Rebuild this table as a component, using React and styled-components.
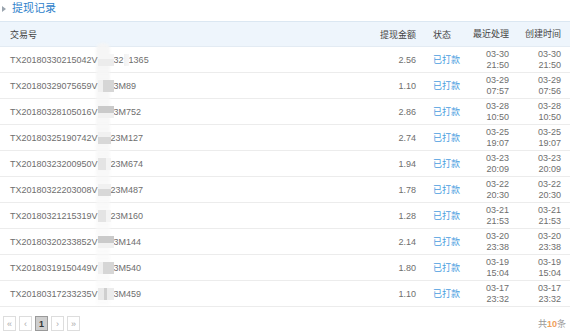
import styled, { createGlobalStyle, css } from "styled-components";

const GlobalStyle = createGlobalStyle`
  html, body {
    margin: 0;
    padding: 0;
    background: #fff;
  }
  body {
    font-family: "Liberation Sans", "Noto Sans CJK SC", sans-serif;
    color: #666;
  }
`;

const rows = [
  { pre: "TX20180330215042V", mask: 0, post: "32", tail: "1365", amount: "2.56", recent: ["03-30", "21:50"], created: ["03-30", "21:50"] },
  { pre: "TX20180329075659V", mask: 1, post: "3M89", amount: "1.10", recent: ["03-29", "07:57"], created: ["03-29", "07:56"] },
  { pre: "TX20180328105016V", mask: 2, post: "3M752", amount: "2.86", recent: ["03-28", "10:50"], created: ["03-28", "10:50"] },
  { pre: "TX20180325190742V", mask: 3, post: "23M127", amount: "2.74", recent: ["03-25", "19:07"], created: ["03-25", "19:07"] },
  { pre: "TX20180323200950V", mask: 4, post: "23M674", amount: "1.94", recent: ["03-23", "20:09"], created: ["03-23", "20:09"] },
  { pre: "TX20180322203008V", mask: 3, post: "23M487", amount: "1.78", recent: ["03-22", "20:30"], created: ["03-22", "20:30"] },
  { pre: "TX20180321215319V", mask: 4, post: "23M160", amount: "1.28", recent: ["03-21", "21:53"], created: ["03-21", "21:53"] },
  { pre: "TX20180320233852V", mask: 2, post: "3M144", amount: "2.14", recent: ["03-20", "23:38"], created: ["03-20", "23:38"] },
  { pre: "TX20180319150449V", mask: 1, post: "3M540", amount: "1.80", recent: ["03-19", "15:04"], created: ["03-19", "15:04"] },
  { pre: "TX20180317233235V", mask: 5, post: "3M459", amount: "1.10", recent: ["03-17", "23:32"], created: ["03-17", "23:32"] },
];

const masks = [
  "linear-gradient(180deg, #f6f6f6 0 40%, #ececec 40% 100%)",
  "linear-gradient(90deg, #f0f0f0 0 30%, #d6d6d6 30% 100%)",
  "linear-gradient(180deg, #cacaca 0 55%, #f1f1f1 55% 100%)",
  "linear-gradient(180deg, #f1f1f1 0 45%, #d8d8d8 45% 100%)",
  "linear-gradient(90deg, #e4e4e4 0 60%, #f4f4f4 60% 100%)",
  "linear-gradient(90deg, #e9e9e9 0 40%, #cfcfcf 40% 55%, #ececec 55% 100%)",
];

function Triangle() {
  return (
    <svg width="4" height="6" viewBox="0 0 4 6">
      <path d="M0 0 L4 3 L0 6 Z" fill="#9aa4ae" />
    </svg>
  );
}

function App() {
  return (
    <>
      <GlobalStyle />
      <Page>
        <TitleBar>
          <Triangle />
          <Title>提现记录</Title>
        </TitleBar>
        <Table>
          <HeadRow>
            <IdCell>交易号</IdCell>
            <AmountCell>提现金额</AmountCell>
            <StatusCell head>状态</StatusCell>
            <TimeCell>最近处理</TimeCell>
            <TimeCell created>创建时间</TimeCell>
          </HeadRow>
          <Body>
            <Smear />
            {rows.map((r) => (
              <Row key={r.pre}>
                <IdCell>
                  {r.pre}
                  <Mask $bg={masks[r.mask]} $w={r.post.startsWith("23") ? 13 : 16} />
                  {r.post}
                  {r.tail && (
                    <>
                      <Mask $bg="linear-gradient(90deg,#f2f2f2,#f7f7f7)" $w={5} />
                      {r.tail}
                    </>
                  )}
                </IdCell>
                <AmountCell>{r.amount}</AmountCell>
                <StatusCell>已打款</StatusCell>
                <TimeCell>
                  <span>{r.recent[0]}</span>
                  <span>{r.recent[1]}</span>
                </TimeCell>
                <TimeCell created>
                  <span>{r.created[0]}</span>
                  <span>{r.created[1]}</span>
                </TimeCell>
              </Row>
            ))}
          </Body>
        </Table>
        <Footer>
          <Pager>
            <PageBtn>«</PageBtn>
            <PageBtn>‹</PageBtn>
            <PageBtn active>1</PageBtn>
            <PageBtn>›</PageBtn>
            <PageBtn>»</PageBtn>
          </Pager>
          <Total>
            共<em>10</em>条
          </Total>
        </Footer>
      </Page>
    </>
  );
}

export default App;

const Page = styled.div`
  width: 570px;
  height: 333px;
  overflow: hidden;
  font-size: 9px;
`;

const TitleBar = styled.div`
  display: flex;
  align-items: center;
  gap: 6px;
  height: 17px;
  padding-left: 2px;
`;

const Title = styled.span`
  font-size: 11px;
  color: #2f7fcb;
  line-height: 17px;
`;

const Table = styled.div`
  margin-top: 4px;
`;

const grid = css`
  display: grid;
  grid-template-columns: 1fr 47px 60px 33px 52px;
  align-items: center;
  padding: 0 9px 0 10px;
  box-sizing: border-box;
`;

const HeadRow = styled.div`
  ${grid}
  height: 26px;
  background: #eef5fc;
  border-top: 1px solid #dbe7f2;
  border-bottom: 1px solid #e3ebf3;
  box-sizing: border-box;
  color: #444;
`;

const Body = styled.div`
  position: relative;
`;

const Smear = styled.div`
  position: absolute;
  left: 96px;
  top: -4px;
  width: 14px;
  height: 262px;
  background: linear-gradient(180deg, rgba(245,245,245,0.9), rgba(250,250,250,0.6));
  border-radius: 6px 6px 2px 2px;
  filter: blur(1px);
  pointer-events: none;
`;

const Row = styled.div`
  ${grid}
  height: 26px;
  border-bottom: 1px solid #ececec;
  box-sizing: border-box;
  color: #6e6e6e;
`;

const IdCell = styled.div`
  white-space: nowrap;
  display: flex;
  align-items: center;
  position: relative;
  z-index: 1;
`;

const Mask = styled.span`
  display: inline-block;
  width: ${(p) => p.$w}px;
  height: 12px;
  background: ${(p) => p.$bg};
  filter: blur(0.4px);
`;

const AmountCell = styled.div`
  text-align: right;
`;

const StatusCell = styled.div`
  padding-left: 17px;
  color: ${(p) => (p.head ? "#444" : "#4a9de0")};
`;

const TimeCell = styled.div`
  display: flex;
  flex-direction: column;
  align-items: flex-end;
  line-height: 11px;
  white-space: nowrap;
`;

const Footer = styled.div`
  display: flex;
  justify-content: space-between;
  align-items: center;
  padding: 9px 4px 0 3px;
`;

const Pager = styled.div`
  display: flex;
  gap: 3px;
`;

const PageBtn = styled.div`
  width: 13px;
  height: 15px;
  box-sizing: border-box;
  border: 1px solid ${(p) => (p.active ? "#9a9a9a" : "#dddddd")};
  background: ${(p) => (p.active ? "#cfcfcf" : "#fff")};
  color: ${(p) => (p.active ? "#333" : "#aaa")};
  font-weight: ${(p) => (p.active ? "bold" : "normal")};
  font-size: 9px;
  display: flex;
  align-items: center;
  justify-content: center;
`;

const Total = styled.div`
  color: #999;
  font-size: 9px;
  em {
    font-style: normal;
    color: #f0a05a;
    font-weight: bold;
  }
`;
